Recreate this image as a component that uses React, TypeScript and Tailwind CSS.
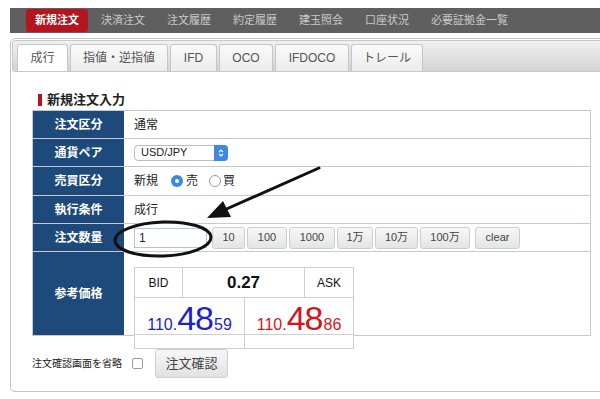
import React from "react";

const navItems = ["新規注文", "決済注文", "注文履歴", "約定履歴", "建玉照会", "口座状況", "必要証拠金一覧"];

const tabs = [
  { label: "成行", w: "w-[51px]" },
  { label: "指値・逆指値", w: "w-[98px]" },
  { label: "IFD", w: "w-[47px]" },
  { label: "OCO", w: "w-[54px]" },
  { label: "IFDOCO", w: "w-[74px]" },
  { label: "トレール", w: "w-[72px]" },
];

const qtyButtons = [
  { label: "10", w: "w-[33px]" },
  { label: "100", w: "w-[40px]" },
  { label: "1000", w: "w-[46px]" },
  { label: "1万", w: "w-[36px]" },
  { label: "10万", w: "w-[43px]" },
  { label: "100万", w: "w-[50px]" },
];

const Row = ({
  label,
  h,
  children,
  last,
}: {
  label: string;
  h: string;
  children: React.ReactNode;
  last?: boolean;
}) => (
  <div className={`flex ${h} ${last ? "" : "border-b border-[#c3cad3]"}`}>
    <div className="w-[91px] shrink-0 bg-[#1e4a7b] flex items-center justify-center text-white font-bold text-[12px]">
      {label}
    </div>
    <div className="flex-1 flex items-center pl-[10px] text-[12px] text-[#222]">{children}</div>
  </div>
);

const Radio = ({ checked }: { checked?: boolean }) =>
  checked ? (
    <span className="w-[12px] h-[12px] shrink-0 rounded-full bg-[#3c88e6] flex items-center justify-center">
      <span className="block w-[4px] h-[4px] rounded-full bg-white" />
    </span>
  ) : (
    <span className="block w-[12px] h-[12px] shrink-0 rounded-full border border-[#9a9a9a] bg-white" />
  );

export default function App() {
  return (
    <div className="relative w-[600px] h-[399px] overflow-hidden bg-white pt-[8px] font-[family-name:'Liberation_Sans','Noto_Sans_CJK_JP',sans-serif]">
      {/* top nav */}
      <div className="ml-[10px] h-[25px] bg-[#5f5f5f] flex items-start pl-[16px] gap-[4px]">
        {navItems.map((n, i) => (
          <div
            key={n}
            className={
              i === 0
                ? "mt-[1px] h-[23px] px-[9px] flex items-center rounded-[3px] bg-[#b3161e] text-white font-bold text-[11px]"
                : "mt-[1px] h-[23px] px-[9px] flex items-center text-[#c9c9c9] text-[11px]"
            }
          >
            {n}
          </div>
        ))}
      </div>

      {/* panel */}
      <div className="ml-[10px] mt-[5px] w-[600px] border border-[#c4c4c4] rounded-[5px] pb-[13px]">
        <div className="mt-[1px] mx-[1px] h-[32px] rounded-[3px] border border-[#c8c8c8] bg-gradient-to-b from-[#f0f0f0] to-[#d4d4d4] flex items-end pl-[4px] gap-[2px]">
          {tabs.map((t, i) => (
            <div
              key={t.label}
              className={`${t.w} h-[27px] rounded-t-[3px] border border-b-0 border-[#c6c6c6] flex items-center justify-center text-[12px] text-[#555] ${
                i === 0 ? "bg-white" : "bg-gradient-to-b from-[#fafafa] to-[#ececec]"
              }`}
            >
              {t.label}
            </div>
          ))}
        </div>

        <div className="pl-[21px]">
          <div className="mt-[20px] h-[16px] flex items-center pl-[6px] gap-[5px]">
            <span className="w-[4px] h-[12px] bg-[#b3161e]" />
            <span className="text-[13px] font-bold text-[#222]">新規注文入力</span>
          </div>

          <div className="mt-[2px] w-[559px] border border-[#c9c9c9]">
            <Row label="注文区分" h="h-[28px]">
              通常
            </Row>
            <Row label="通貨ペア" h="h-[28px]">
              <div className="w-[94px] h-[16px] rounded-[4px] border border-[#bdbdbd] bg-white flex items-center justify-between pl-[6px] text-[11px] text-[#222]">
                USD/JPY
                <span className="w-[14px] h-[16px] -mr-px rounded-r-[4px] bg-[#3c88e6] flex items-center justify-center">
                  <svg width="6" height="10" viewBox="0 0 6 10" fill="none" stroke="white" strokeWidth="1.2">
                    <path d="M1 4 L3 2 L5 4" />
                    <path d="M1 6 L3 8 L5 6" />
                  </svg>
                </span>
              </div>
            </Row>
            <Row label="売買区分" h="h-[29px]">
              <span>新規</span>
              <span className="ml-[13px]">
                <Radio checked />
              </span>
              <span className="ml-[3px]">売</span>
              <span className="ml-[11px]">
                <Radio />
              </span>
              <span className="ml-[2px]">買</span>
            </Row>
            <Row label="執行条件" h="h-[28px]">
              成行
            </Row>
            <Row label="注文数量" h="h-[28px]">
              <div className="w-[73px] h-[20px] border border-[#a9c6e6] bg-white flex items-center pl-[4px] text-[12px] text-[#222]">
                1
              </div>
              <div className="ml-[5px] flex gap-[2px]">
                {qtyButtons.map((b) => (
                  <div
                    key={b.label}
                    className={`${b.w} h-[22px] rounded-[3px] border border-[#cdcdcd] bg-gradient-to-b from-[#f7f7f7] to-[#e4e4e4] flex items-center justify-center text-[11px] text-[#444]`}
                  >
                    {b.label}
                  </div>
                ))}
              </div>
              <div className="ml-[5px] w-[45px] h-[22px] rounded-[3px] border border-[#cdcdcd] bg-gradient-to-b from-[#f7f7f7] to-[#e4e4e4] flex items-center justify-center text-[11px] text-[#444]">
                clear
              </div>
            </Row>
            <div className="flex h-[83px]">
              <div className="w-[91px] shrink-0 bg-[#1e4a7b] flex items-center justify-center text-white font-bold text-[12px]">
                参考価格
              </div>
              <div className="flex-1 pl-[10px] pt-[15px]">
                <div className="w-[220px] h-[82px] border border-[#cfcfcf] bg-white flex flex-col">
                  <div className="h-[30px] flex border-b border-[#cfcfcf] text-[12px] text-[#111]">
                    <div className="w-[48px] flex items-center justify-center border-r border-[#cfcfcf]">BID</div>
                    <div className="w-[122px] flex items-center justify-center border-r border-[#cfcfcf] font-bold text-[17px]">
                      0.27
                    </div>
                    <div className="flex-1 flex items-center justify-center">ASK</div>
                  </div>
                  <div className="h-[37px] flex border-b border-[#cfcfcf]">
                    <div className="w-[110px] flex items-end justify-center pb-[1px] border-r border-[#cfcfcf] text-[#1b22c9] leading-none">
                      <span className="text-[16px]">110.</span>
                      <span className="text-[34px] tracking-[-1px] -mb-[2px]">48</span>
                      <span className="text-[16px] ml-[1px]">59</span>
                    </div>
                    <div className="flex-1 flex items-end justify-center pb-[1px] text-[#d4141c] leading-none">
                      <span className="text-[16px]">110.</span>
                      <span className="text-[34px] tracking-[-1px] -mb-[2px]">48</span>
                      <span className="text-[16px] ml-[1px]">86</span>
                    </div>
                  </div>
                  <div className="flex-1 flex">
                    <div className="w-[110px] border-r border-[#cfcfcf]" />
                  </div>
                </div>
              </div>
            </div>
          </div>

          <div className="mt-[13px] h-[29px] flex items-center">
            <span className="text-[10px] text-[#222]">注文確認画面を省略</span>
            <span className="ml-[10px] w-[11px] h-[11px] rounded-[2px] border border-[#9a9a9a] bg-white" />
            <div className="ml-[12px] w-[73px] h-[29px] rounded-[3px] border border-[#cdcdcd] bg-gradient-to-b from-[#f7f7f7] to-[#e2e2e2] flex items-center justify-center text-[13px] text-[#444]">
              注文確認
            </div>
          </div>
        </div>
      </div>

      {/* hand-drawn annotation */}
      <svg className="absolute left-0 top-0 pointer-events-none" width="600" height="399" viewBox="0 0 600 399">
        <line x1="319" y1="168" x2="222" y2="211" stroke="#111" strokeWidth="3" strokeLinecap="round" />
        <polygon points="207,218 223,201 231,217" fill="#111" />
        <ellipse cx="163" cy="239" rx="48" ry="17" fill="none" stroke="#111" strokeWidth="3" transform="rotate(-2 163 239)" />
      </svg>
    </div>
  );
}
